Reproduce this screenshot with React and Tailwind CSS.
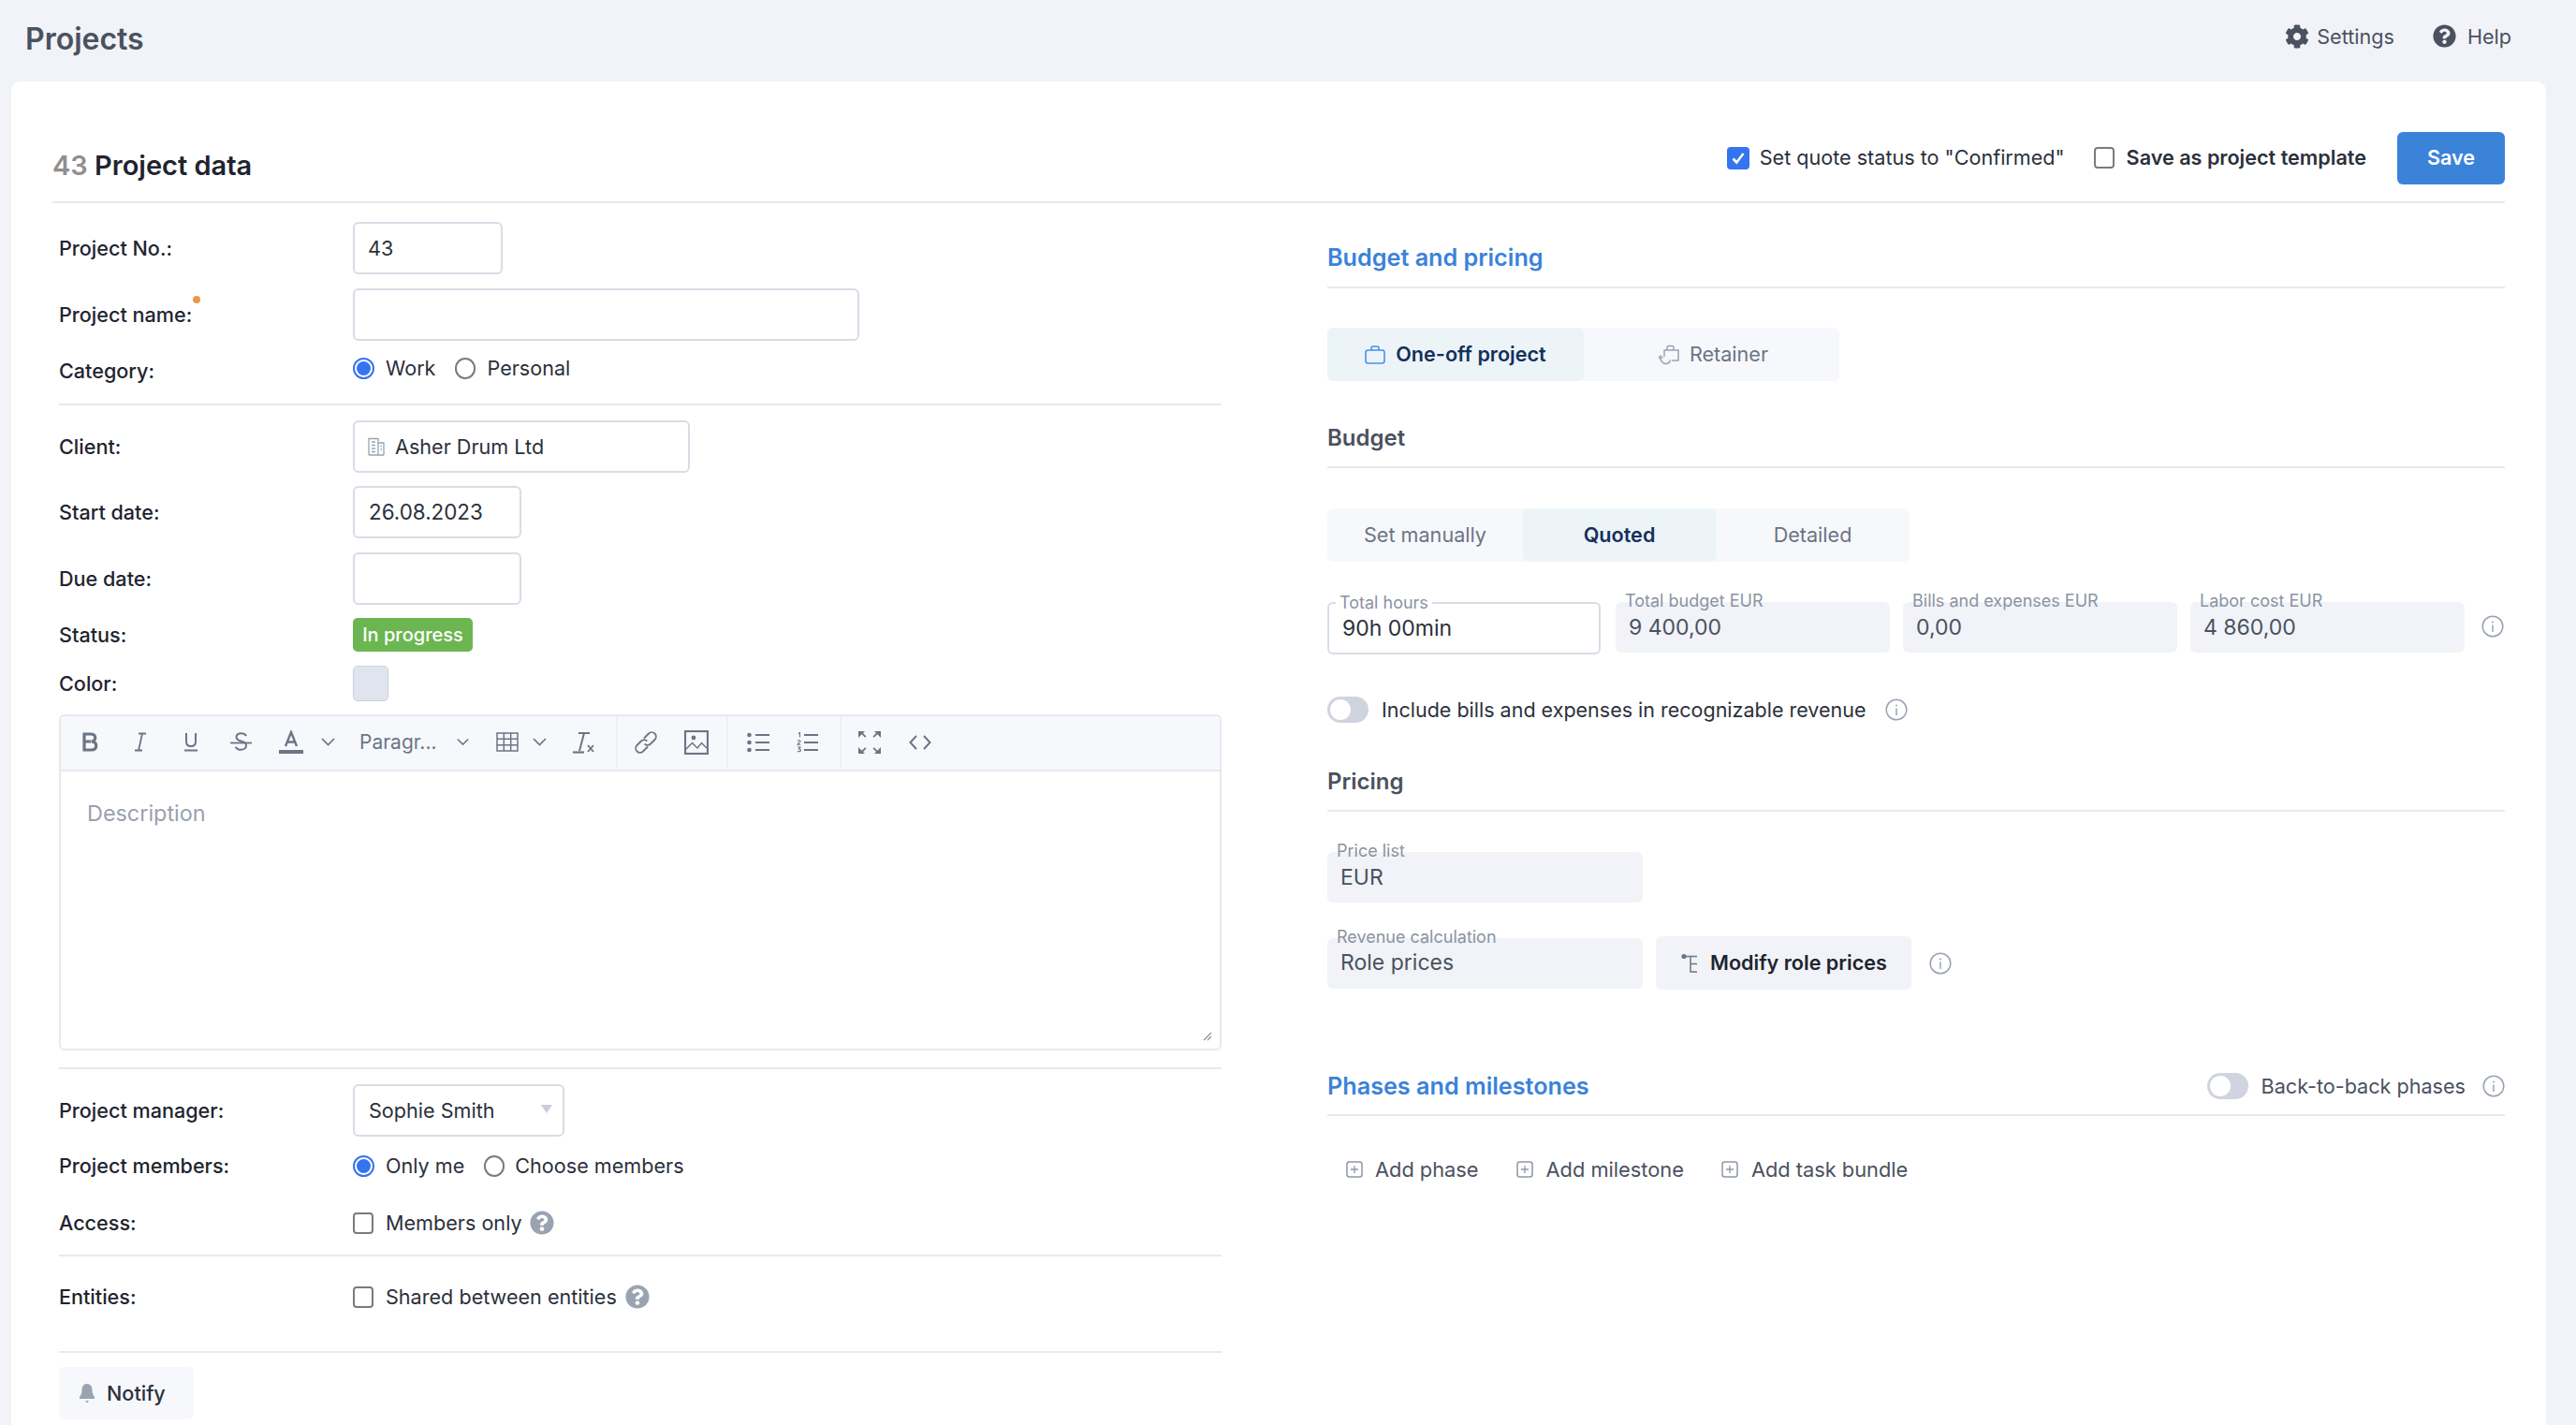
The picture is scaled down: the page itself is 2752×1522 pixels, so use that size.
import React from "react";
import { FaCog, FaQuestionCircle } from "react-icons/fa";

const ic = "#6b7585";

function Svg({ w, h = w, vb, children, className = "" }) {
  return (
    <svg width={w} height={h} viewBox={vb || `0 0 ${w} ${h}`} fill="none" className={`shrink-0 ${className}`}>
      {children}
    </svg>
  );
}

function Chevron({ w = 15, className = "" }) {
  return (
    <Svg w={w} h={9} vb="0 0 15 9" className={className}>
      <path d="M1 1l6.500 6.500L14 1" stroke={ic} strokeWidth="1.700" />
    </Svg>
  );
}

function Info({ className = "" }) {
  return (
    <Svg w={24} vb="0 0 24 24" className={className}>
      <circle cx="12" cy="12" r="10.800" stroke="#9aa3b2" strokeWidth="1.500" />
      <circle cx="12" cy="7.400" r="1" fill="#9aa3b2" />
      <path d="M12 10.500v7.500" stroke="#9aa3b2" strokeWidth="1.500" />
    </Svg>
  );
}

function Radio({ on }) {
  return on ? (
    <span className="w-[23px] h-[23px] rounded-full border-2 border-[#3574f0] flex items-center justify-center shrink-0">
      <span className="block w-[15px] h-[15px] rounded-full bg-[#3574f0]" />
    </span>
  ) : (
    <span className="block w-[22px] h-[23px] rounded-full border-2 border-[#7b7b7b] shrink-0" />
  );
}

function Check({ on }) {
  return on ? (
    <span className="w-[24px] h-[24px] rounded-[4px] bg-[#3574f0] flex items-center justify-center shrink-0">
      <Svg w={16} h={16} vb="0 0 16 16">
        <path d="M2.500 8.500l3.700 4L13.500 3" stroke="#fff" strokeWidth="2.600" />
      </Svg>
    </span>
  ) : (
    <span className="block w-[22px] h-[23px] rounded-[4px] border-2 border-[#7b7b7b] bg-white shrink-0" />
  );
}

function Toggle() {
  return (
    <span className="w-[44px] h-[28px] rounded-full bg-[#cfd4de] flex items-center pl-[3px] shrink-0">
      <span className="block w-[22px] h-[22px] rounded-full bg-white" />
    </span>
  );
}

function Label({ children, dot }) {
  return (
    <div className="w-[314px] shrink-0 text-[21.6px] font-medium text-[#1f2430] relative">
      <span className="relative">
        {children}
        {dot && <span className="absolute -top-[7px] -right-[9px] w-[8px] h-[8px] rounded-full bg-[#e99a4f]" />}
      </span>
    </div>
  );
}

function Box({ w, children, className = "" }) {
  return (
    <div style={{ width: w }} className={`h-[56px] rounded-[6px] border-2 border-[#d9dce7] bg-white flex items-center text-[21.6px] text-[#2b303b] ${className}`}>
      {children}
    </div>
  );
}

function Row({ label, dot, children, className = "" }) {
  return (
    <div className={`flex items-center ${className}`}>
      <Label dot={dot}>{label}</Label>
      {children}
    </div>
  );
}

function Rule({ className = "" }) {
  return <div className={`h-[2px] bg-[#e7e9f0] ${className}`} />;
}

const Bold = () => (
  <Svg w={18} h={21} vb="0 0 18 21">
    <path d="M3 2h7c3 0 4.700 1.500 4.700 4 0 2.200-1.500 3.700-4 4 3 .1 5 1.800 5 4.500 0 2.900-2 4.500-5.300 4.500H3V2zM3 10h7" stroke={ic} strokeWidth="3.200" />
  </Svg>
);
const Italic = () => (
  <Svg w={14} h={21} vb="0 0 14 21">
    <path d="M5 1.500h8M1 19.500h8M9 1.500L5 19.500" stroke={ic} strokeWidth="1.800" />
  </Svg>
);
const Under = () => (
  <Svg w={14} h={21} vb="0 0 14 21">
    <path d="M2 1v9c0 3.500 2 5 5 5s5-1.500 5-5V1" stroke={ic} strokeWidth="2" />
    <path d="M0 19.500h14" stroke={ic} strokeWidth="2" />
  </Svg>
);
const Strike = () => (
  <Svg w={23} h={22} vb="0 0 23 22">
    <path d="M17 4c-1-1.800-3-2.700-5.500-2.700-3 0-5 1.500-5 4 0 2 1.300 3.300 5 4.200 4 1 5.500 2.400 5.500 4.800 0 2.700-2.400 4.500-5.500 4.500-2.700 0-4.800-1-6-3" stroke={ic} strokeWidth="2" />
    <path d="M0 11.500h23" stroke={ic} strokeWidth="1.800" />
  </Svg>
);
const AColor = () => (
  <Svg w={26} h={25} vb="0 0 26 25">
    <path d="M7 17L13 2l6 15M9 12.500h8" stroke={ic} strokeWidth="2.400" />
    <rect y="21" width="26" height="4" fill={ic} />
  </Svg>
);
const Table = () => (
  <Svg w={24} h={21} vb="0 0 24 21">
    <path d="M1 1h22v19H1zM1 7.300h22M1 13.700h22M8.300 1v19M15.700 1v19" stroke={ic} strokeWidth="1.500" />
  </Svg>
);
const Clear = () => (
  <Svg w={23} h={24} vb="0 0 23 24">
    <path d="M6 2h12M12 2L7 21" stroke={ic} strokeWidth="2" />
    <path d="M0 22.500h12" stroke={ic} strokeWidth="2.200" />
    <path d="M16 15l6 7M22 15l-6 7" stroke={ic} strokeWidth="1.800" />
  </Svg>
);
const LinkI = () => (
  <Svg w={26} h={26} vb="0 0 26 26">
    <path d="M11 8.500l5-5a4.500 4.500 0 016.500 6.500l-4.500 4.500a4.500 4.500 0 01-6.300 0M15 17.500l-5 5a4.500 4.500 0 01-6.500-6.500L8 11.500a4.500 4.500 0 016.300 0" stroke={ic} strokeWidth="1.800" />
  </Svg>
);
const ImageI = () => (
  <Svg w={26} h={26} vb="0 0 26 26">
    <rect x="1" y="1" width="24" height="24" stroke={ic} strokeWidth="2.200" />
    <circle cx="10" cy="8" r="2.400" fill={ic} />
    <path d="M2 20l6.500-6.500L14 19l4.500-5.500L24 19" stroke={ic} strokeWidth="1.500" />
  </Svg>
);
const UL = () => (
  <Svg w={24} h={22} vb="0 0 24 22">
    <circle cx="2.500" cy="3" r="2.300" fill={ic} />
    <circle cx="2.500" cy="11" r="2.300" fill={ic} />
    <circle cx="2.500" cy="19" r="2.300" fill={ic} />
    <path d="M9 3h15M9 11h15M9 19h15" stroke={ic} strokeWidth="2.200" />
  </Svg>
);
const OL = () => (
  <Svg w={23} h={22} vb="0 0 23 22">
    <path d="M2 1.500l1.500-1v5M1 9.500c1-1.400 3.200-.8 3 .5-.2 1-2.300 1.800-3 3.200h3.300M1 16h3l-1.500 2c1.600 0 2 .8 2 1.500 0 1.200-2.300 1.600-3.400.8" stroke={ic} strokeWidth="1.100" />
    <path d="M8 3h15M8 11h15M8 19h15" stroke={ic} strokeWidth="2.200" />
  </Svg>
);
const Full = () => (
  <Svg w={24} h={24} vb="0 0 24 24">
    <path d="M0 0h7L5 2l3.500 3.500-1.300 1.300L3.700 3.300 0 7z" fill={ic} />
    <path d="M24 0h-7l2 2-3.500 3.500 1.300 1.300 3.500-3.500L24 7z" fill={ic} />
    <path d="M24 24h-7l2-2-3.500-3.500 1.300-1.300 3.500 3.500L24 17z" fill={ic} />
    <path d="M0 24h7l-2-2 3.500-3.500-1.300-1.300-3.500 3.500L0 17z" fill={ic} />
  </Svg>
);
const Code = () => (
  <Svg w={24} h={16} vb="0 0 24 16">
    <path d="M8 1L1.500 8 8 15M16 1l6.500 7L16 15" stroke={ic} strokeWidth="2" />
  </Svg>
);

function PlusBox() {
  return (
    <Svg w={18} h={18} vb="0 0 18 18">
      <rect x="1" y="1" width="16" height="16" rx="2.500" stroke="#8f97a6" strokeWidth="1.500" />
      <path d="M9 5v8M5 9h8" stroke="#8f97a6" strokeWidth="1.300" />
    </Svg>
  );
}

function Field({ label, value, w, outlined, className = "" }) {
  return outlined ? (
    <div style={{ width: w }} className={`relative h-[56px] rounded-[6px] border-2 border-[#d9dce7] bg-white flex items-center pl-[14px] text-[23px] text-[#2b303b] ${className}`}>
      <span className="absolute -top-[12px] left-[7px] px-[4px] bg-white text-[18px] leading-[22px] text-[#8b93a2]">{label}</span>
      {value}
    </div>
  ) : (
    <div style={{ width: w }} className={`relative h-[54px] rounded-[6px] bg-[#f1f3f8] flex items-center pl-[14px] text-[23px] text-[#4b5160] ${className}`}>
      <span className="absolute -top-[12px] left-[10px] text-[18px] leading-[22px] text-[#8b93a2]">{label}</span>
      {value}
    </div>
  );
}

function Seg({ active, children, w, className = "" }) {
  return (
    <div style={{ width: w }} className={`h-full flex items-center justify-center gap-[11px] rounded-[6px] text-[21.6px] ${active ? "bg-[#ecf4f8] font-semibold text-[#14305a]" : "text-[#6b7585]"} ${className}`}>
      {children}
    </div>
  );
}

export default function App() {
  return (
    <div className="h-[1522px] overflow-hidden bg-[#f1f3f8] font-['Inter','Noto_Sans',sans-serif]">
      <header className="h-[87px] pl-[27px] pr-[69px] flex items-center justify-between">
        <div className="mb-[4px] text-[32px] font-semibold text-[#4a5160]">Projects</div>
        <div className="mb-[9px] flex items-center text-[21.6px] text-[#4b5160]">
          <FaCog size={26} color="#4b5160" />
          <span className="ml-[8px]">Settings</span>
          <FaQuestionCircle size={25} color="#4b5160" className="ml-[41px]" />
          <span className="ml-[12px]">Help</span>
        </div>
      </header>

      <main className="mx-[12px] w-[2708px] h-[1435px] bg-white rounded-t-[10px] px-[44px]">
        <div className="h-[130px] border-b-2 border-[#e7e9f0] flex items-center justify-between pt-[35px]">
          <div className="text-[29px] font-semibold text-[#1f2430] pt-[16px]">
            <span className="text-[#8f8f8f]">43</span> Project data
          </div>
          <div className="flex items-center">
            <Check on />
            <span className="ml-[11px] text-[21.6px] text-[#2b303b]">Set quote status to "Confirmed"</span>
            <span className="ml-[31px]"><Check /></span>
            <span className="ml-[13px] text-[21.6px] font-semibold text-[#2b303b]">Save as project template</span>
            <button className="ml-[33px] w-[115px] h-[56px] rounded-[6px] bg-[#3b82d9] text-white text-[21.6px] font-semibold">Save</button>
          </div>
        </div>

        <div className="flex">
          <section className="ml-[7px] w-[1242px] shrink-0">
            <Row label="Project No.:" className="mt-[20px]">
              <Box w={160} className="pl-[14px]">43</Box>
            </Row>
            <Row label="Project name:" dot className="mt-[15px]">
              <Box w={541} />
            </Row>
            <Row label="Category:" className="mt-[16px] h-[32px] items-start">
              <div className="flex items-center h-[26px]">
                <Radio on />
                <span className="ml-[12px] text-[21.6px] text-[#2b303b]">Work</span>
                <span className="ml-[21px]"><Radio /></span>
                <span className="ml-[12px] text-[21.6px] text-[#2b303b]">Personal</span>
              </div>
            </Row>
            <Rule className="mt-[19px]" />
            <Row label="Client:" className="mt-[16px]">
              <Box w={360} className="pl-[14px]">
                <Svg w={18} h={20} vb="0 0 18 20">
                  <path d="M1 19V1.500h10V19M11 6h6v13M1 19h16M4 5h4M4 8.500h4M4 12h4M4 15.500h4M13.500 9.500h1.500M13.500 13h1.500" stroke="#9aa3b2" strokeWidth="1.300" />
                </Svg>
                <span className="ml-[11px]">Asher Drum Ltd</span>
              </Box>
            </Row>
            <Row label="Start date:" className="mt-[14px]">
              <Box w={180} className="pl-[15px] text-[22.4px]">26.08.2023</Box>
            </Row>
            <Row label="Due date:" className="mt-[15px]">
              <Box w={180} />
            </Row>
            <Row label="Status:" className="mt-[14px]">
              <div className="w-[128px] h-[36px] rounded-[5px] bg-[#6cb651] text-white text-[20px] font-medium flex items-center justify-center">In progress</div>
            </Row>
            <Row label="Color:" className="mt-[15px]">
              <div className="w-[38px] h-[38px] rounded-[5px] bg-[#dfe4ef] border border-[#ccd1dd]" />
            </Row>

            <div className="mt-[14px] h-[359px] rounded-[6px] border-2 border-[#e7e9f0] relative">
              <div className="h-[59px] pb-[2px] bg-[#f7f8fc] border-b-2 border-[#e7e9f0] rounded-t-[6px] flex items-center text-[#6b7585]">
                <span className="ml-[22px]"><Bold /></span>
                <span className="ml-[38px]"><Italic /></span>
                <span className="ml-[40px]"><Under /></span>
                <span className="ml-[35px]"><Strike /></span>
                <span className="ml-[29px]"><AColor /></span>
                <Chevron className="ml-[19px]" />
                <span className="ml-[26px] text-[21px]">Paragr...</span>
                <Chevron w={13} className="ml-[21px]" />
                <span className="ml-[29px]"><Table /></span>
                <Chevron className="ml-[15px]" />
                <span className="ml-[28px]"><Clear /></span>
                <span className="ml-[23px] w-[2px] h-full bg-[#f0f1f6]" />
                <span className="ml-[17px]"><LinkI /></span>
                <span className="ml-[28px]"><ImageI /></span>
                <span className="ml-[19px] w-[2px] h-full bg-[#f0f1f6]" />
                <span className="ml-[20px]"><UL /></span>
                <span className="ml-[29px]"><OL /></span>
                <span className="ml-[23px] w-[2px] h-full bg-[#f0f1f6]" />
                <span className="ml-[18px]"><Full /></span>
                <span className="ml-[30px]"><Code /></span>
              </div>
              <div className="pl-[28px] pt-[27px] text-[23.4px] text-[#9aa1ae]">Description</div>
              <Svg w={10} h={10} vb="0 0 10 10" className="absolute right-[8px] bottom-[8px]">
                <path d="M1 9l8-8M5 9l4-4" stroke="#8b8b8b" strokeWidth="1.100" />
              </Svg>
            </div>

            <Rule className="mt-[18px]" />
            <Row label="Project manager:" className="mt-[16px]">
              <Box w={226} className="relative pl-[15px]">
                Sophie Smith
                <span className="absolute right-[11px] top-[20px] w-0 h-0 border-x-[6px] border-x-transparent border-t-[9px] border-t-[#c8cdd8]" />
              </Box>
            </Row>
            <Row label="Project members:" className="mt-[15px] h-[32px]">
              <Radio on />
              <span className="ml-[12px] text-[21.6px] text-[#2b303b]">Only me</span>
              <span className="ml-[21px]"><Radio /></span>
              <span className="ml-[11px] text-[21.6px] text-[#2b303b]">Choose members</span>
            </Row>
            <Row label="Access:" className="mt-[29px] h-[32px]">
              <Check />
              <span className="ml-[13px] text-[21.6px] text-[#2b303b]">Members only</span>
              <FaQuestionCircle size={26} color="#9aa3b2" className="ml-[8px] shrink-0" />
            </Row>
            <Rule className="mt-[18px]" />
            <Row label="Entities:" className="mt-[27px] h-[32px]">
              <Check />
              <span className="ml-[13px] text-[21.6px] text-[#2b303b]">Shared between entities</span>
              <FaQuestionCircle size={26} color="#9aa3b2" className="ml-[9px] shrink-0" />
            </Row>
            <Rule className="mt-[42px]" />
            <div className="mt-[15px] w-[144px] h-[56px] rounded-[6px] bg-[#f7f8fc] flex items-center pl-[21px] text-[21.6px] font-medium text-[#2b303b]">
              <Svg w={18} h={22} vb="0 0 18 22">
                <path d="M9 1c3.800 0 5.500 3 5.500 6.500 0 3 1 5.500 2.500 7.500v2H1v-2c1.500-2 2.500-4.500 2.500-7.500C3.500 4 5.200 1 9 1z" fill="#9aa3b2" />
                <path d="M7 19h4l-2 2.500z" fill="#9aa3b2" />
              </Svg>
              <span className="ml-[12px]">Notify</span>
            </div>
          </section>

          <section className="ml-[113px] flex-1 min-w-0">
            <div className="mt-[38px] h-[53px] border-b-2 border-[#e7e9f0] text-[25.2px] font-semibold text-[#3b82d9] leading-[40px]">Budget and pricing</div>
            <div className="mt-[42px] w-[547px] h-[57px] rounded-[6px] bg-[#f7f8fc] flex">
              <Seg active w={274}>
                <Svg w={22} h={20} vb="0 0 22 20">
                  <rect x="1" y="5" width="20" height="14" rx="2.500" stroke="#4a8fe8" strokeWidth="1.600" />
                  <path d="M7 5V2.500C7 1.700 7.700 1 8.500 1h5c.8 0 1.500.7 1.500 1.500V5" stroke="#4a8fe8" strokeWidth="1.600" />
                </Svg>
                One-off project
              </Seg>
              <Seg w={273} className="pl-[4px]">
                <Svg w={22} h={22} vb="0 0 22 22">
                  <path d="M6 13V6h15v11h-7M9 6V3c0-1 .8-1.500 1.500-1.500h4c.7 0 1.500.5 1.500 1.500v3M1.500 12c0 5 2.500 8.500 6 8.500 2.500 0 4.500-1.500 5-4" stroke="#9aa3b2" strokeWidth="1.500" />
                  <path d="M0 15l2 -3 2.500 2.500" stroke="#9aa3b2" strokeWidth="1.400" />
                </Svg>
                Retainer
              </Seg>
            </div>
            <div className="mt-[42px] h-[51px] border-b-2 border-[#e7e9f0] text-[24px] font-semibold text-[#4b5160] leading-[38px]">Budget</div>
            <div className="mt-[43px] w-[622px] h-[57px] rounded-[6px] bg-[#f7f8fc] flex">
              <Seg w={209}>Set manually</Seg>
              <Seg active w={206}>Quoted</Seg>
              <Seg w={207}>Detailed</Seg>
            </div>
            <div className="mt-[43px] flex items-start">
              <Field outlined label="Total hours" value="90h 00min" w={292} />
              <Field label="Total budget EUR" value="9 400,00" w={293} className="ml-[16px]" />
              <Field label="Bills and expenses EUR" value="0,00" w={293} className="ml-[14px]" />
              <Field label="Labor cost EUR" value="4 860,00" w={293} className="ml-[14px]" />
              <Info className="ml-[18px] mt-[14px]" />
            </div>
            <div className="mt-[45px] flex items-center h-[28px]">
              <Toggle />
              <span className="ml-[14px] text-[21.5px] text-[#2b303b]">Include bills and expenses in recognizable revenue</span>
              <Info className="ml-[21px]" />
            </div>
            <div className="mt-[44px] h-[51px] border-b-2 border-[#e7e9f0] text-[24px] font-semibold text-[#4b5160] leading-[38px]">Pricing</div>
            <Field label="Price list" value="EUR" w={337} className="mt-[43px]" />
            <div className="mt-[36px] flex items-center">
              <Field label="Revenue calculation" value="Role prices" w={337} />
              <div className="ml-[14px] w-[273px] h-[57px] rounded-[6px] bg-[#f1f3f8] flex items-center pl-[27px] text-[21.6px] font-semibold text-[#1f2430]">
                <Svg w={20} h={22} vb="0 0 20 22">
                  <circle cx="3" cy="3.500" r="2.600" fill="#6b7585" />
                  <path d="M3 3.500h14M10 3.500V20h7M10 11.500h7" stroke="#6b7585" strokeWidth="1.500" />
                </Svg>
                <span className="ml-[11px]">Modify role prices</span>
              </div>
              <Info className="ml-[19px]" />
            </div>
            <div className="mt-[86px] h-[49px] border-b-2 border-[#e7e9f0] flex items-start justify-between">
              <span className="text-[25.2px] font-semibold text-[#3b82d9] leading-[34px]">Phases and milestones</span>
              <div className="flex items-center text-[21.6px] text-[#4b5160] h-[34px]">
                <Toggle />
                <span className="ml-[14px]">Back-to-back phases</span>
                <Info className="ml-[18px]" />
              </div>
            </div>
            <div className="mt-[42px] flex items-center text-[21.8px] text-[#4b5160] h-[30px]">
              <span className="ml-[20px]"><PlusBox /></span>
              <span className="ml-[13px]">Add phase</span>
              <span className="ml-[40px]"><PlusBox /></span>
              <span className="ml-[14px]">Add milestone</span>
              <span className="ml-[40px]"><PlusBox /></span>
              <span className="ml-[14px]">Add task bundle</span>
            </div>
          </section>
        </div>
      </main>
    </div>
  );
}
